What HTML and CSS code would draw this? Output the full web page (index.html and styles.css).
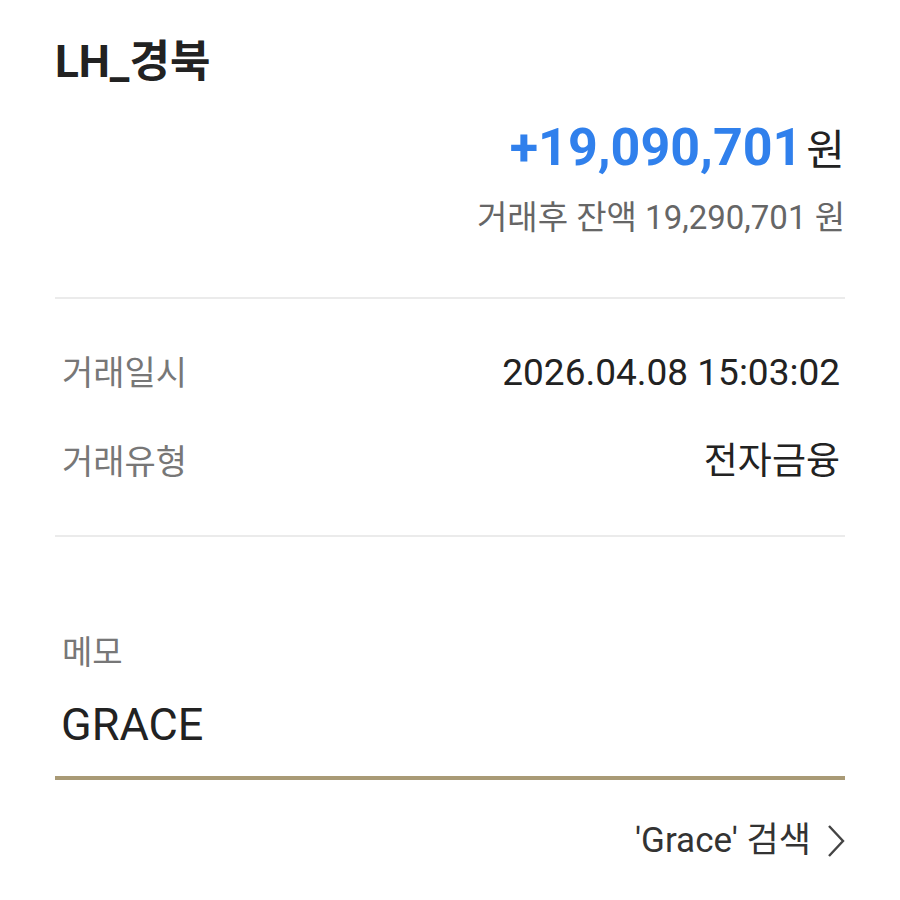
FILE: index.html
```html
<!DOCTYPE html>
<html>

<head>
  <title>거래내역 상세</title>
  <link rel="stylesheet" href="styles.css">
</head>

<body>
  <div class="detail">
    <h1 class="account">LH_경북</h1>

    <div class="amount-block">
      <div class="amount"><span class="num">+19,090,701</span> <span class="unit">원</span></div>
      <div class="balance">거래후 잔액 19,290,701 원</div>
    </div>

    <hr class="divider">

    <div class="rows">
      <div class="row">
        <span class="row-label">거래일시</span>
        <span class="row-value">2026.04.08 15:03:02</span>
      </div>
      <div class="row">
        <span class="row-label">거래유형</span>
        <span class="row-value">전자금융</span>
      </div>
    </div>

    <hr class="divider">

    <div class="memo">
      <label class="memo-label">메모</label>
      <div class="memo-value">GRACE</div>
    </div>

    <div class="search">
      <span>'Grace' 검색</span>
      <svg class="chevron" width="18" height="34" viewBox="0 0 18 34">
        <path d="M2 2 L16 17 L2 32" fill="none" stroke="#444" stroke-width="2.4"/>
      </svg>
    </div>
  </div>
</body>

</html>
```

FILE: styles.css
```css
body {
  margin: 0;
  background: #ffffff;
  font-family: Roboto, "Noto Sans CJK KR", sans-serif;
  color: #222222;
}

.detail {
  padding: 36px 55px 0 55px;
}

.account {
  margin: 0;
  font-size: 44px;
  font-weight: 700;
  line-height: 52px;
  color: #222222;
}

.amount-block {
  text-align: right;
  margin-top: 28px;
}

.amount {
  line-height: 64px;
}

.amount .num {
  font-size: 52px;
  font-weight: 700;
  color: #3080ec;
}

.amount .unit {
  font-size: 42px;
  color: #222222;
}

.balance {
  margin-top: 6px;
  font-size: 33px;
  line-height: 40px;
  color: #666666;
}

.divider {
  border: 0;
  height: 2px;
  background: #ebebeb;
  margin: 59px 0 0 0;
}

.rows {
  padding: 52px 5px 51px 7px;
}

.row {
  display: flex;
  justify-content: space-between;
  align-items: baseline;
  line-height: 44px;
}

.row + .row {
  margin-top: 45px;
}

.row-label {
  font-size: 34px;
  color: #777777;
}

.row-value {
  font-size: 37px;
  color: #222222;
}

.rows + .divider {
  margin-top: 0;
}

.memo {
  padding: 96px 0 23px 0;
  border-bottom: 4px solid #a99a76;
}

.memo-label {
  display: block;
  padding-left: 7px;
  font-size: 33px;
  line-height: 40px;
  color: #777777;
}

.memo-value {
  margin-top: 24px;
  padding-left: 6px;
  font-size: 45px;
  line-height: 56px;
  color: #222222;
}

.search {
  display: flex;
  justify-content: flex-end;
  align-items: center;
  gap: 16px;
  margin-top: 39px;
  font-size: 35px;
  line-height: 44px;
  color: #333333;
}
```
